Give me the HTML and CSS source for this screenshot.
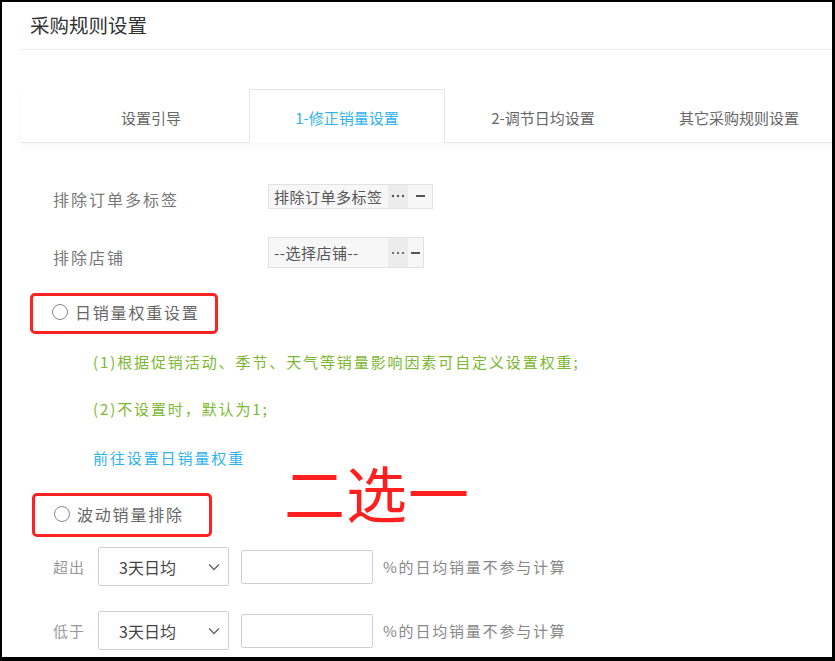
FILE: index.html
```html
<!DOCTYPE html>
<html lang="zh-CN">
<head>
<meta charset="utf-8">
<title>采购规则设置</title>
<link rel="stylesheet" href="styles.css">
</head>
<body>
<div class="frame">
  <div class="header"><h1 class="title">采购规则设置</h1></div>
  <div class="tabs">
    <div class="tab">设置引导</div>
    <div class="tab active">1-修正销量设置</div>
    <div class="tab">2-调节日均设置</div>
    <div class="tab">其它采购规则设置</div>
  </div>
  <div class="form">
    <div class="row row-tags">
      <span class="label">排除订单多标签</span>
      <div class="picker picker-tags">
        <span class="picker-text">排除订单多标签</span>
        <span class="picker-more"><svg width="14" height="4" viewBox="0 0 14 4"><circle cx="2" cy="2" r="1.2" fill="#555"/><circle cx="7" cy="2" r="1.2" fill="#555"/><circle cx="12" cy="2" r="1.2" fill="#555"/></svg></span>
        <span class="picker-minus"><span class="minus-bar"></span></span>
      </div>
    </div>
    <div class="row row-shop">
      <span class="label">排除店铺</span>
      <div class="picker picker-shop">
        <span class="picker-text">--选择店铺--</span>
        <span class="picker-more"><svg width="14" height="4" viewBox="0 0 14 4"><circle cx="2" cy="2" r="1.1" fill="#555"/><circle cx="7" cy="2" r="1.1" fill="#555"/><circle cx="12" cy="2" r="1.1" fill="#555"/></svg></span>
        <span class="picker-minus"><span class="minus-bar"></span></span>
      </div>
    </div>
    <div class="mark mark-weight">
      <span class="radio"></span><span class="radio-text">日销量权重设置</span>
    </div>
    <p class="tip tip-1">(1)根据促销活动、季节、天气等销量影响因素可自定义设置权重;</p>
    <p class="tip tip-2">(2)不设置时，默认为1;</p>
    <a class="link">前往设置日销量权重</a>
    <div class="choice">
      <div class="mark mark-wave">
        <span class="radio"></span><span class="radio-text">波动销量排除</span>
      </div>
      <span class="annot">二选一</span>
    </div>
    <div class="row row-range row-over">
      <span class="small-label">超出</span>
      <div class="select"><span>3天日均</span><svg class="chev" width="12" height="8" viewBox="0 0 12 8"><polyline points="1,1.5 6,6.5 11,1.5" fill="none" stroke="#666" stroke-width="1.4"/></svg></div>
      <div class="input"></div>
      <span class="hint">%的日均销量不参与计算</span>
    </div>
    <div class="row row-range row-under">
      <span class="small-label">低于</span>
      <div class="select"><span>3天日均</span><svg class="chev" width="12" height="8" viewBox="0 0 12 8"><polyline points="1,1.5 6,6.5 11,1.5" fill="none" stroke="#666" stroke-width="1.4"/></svg></div>
      <div class="input"></div>
      <span class="hint">%的日均销量不参与计算</span>
    </div>
  </div>
</div>
</body>
</html>
```

FILE: styles.css
```css
* { box-sizing: border-box; }
html, body { margin: 0; padding: 0; background: #000; }
body { font-family: "Noto Sans CJK SC", "Noto Sans", sans-serif; }
.frame {
  width: 835px; height: 661px; overflow: hidden;
  background: #fff;
  border-style: solid; border-color: #000;
  border-width: 2px 3px 4px 2px;
}
.header {
  margin-left: 19px;
  height: 48px;
  border-bottom: 1px solid #ececec;
  display: flex; align-items: center;
}
.title {
  margin: 0; padding-left: 9px;
  font-size: 19.5px; font-weight: 400; color: #333;
  line-height: 1;
  margin-top: -2px;
}
.tabs {
  margin-left: 19px;
  margin-top: 39px;
  padding-left: 32px;
  height: 54px;
  display: flex;
  border-bottom: 1px solid #e6e6e6;
  box-shadow: 0 3px 8px rgba(0,0,0,0.035);
}
.tab {
  flex: 0 0 196px;
  height: 54px;
  display: flex; align-items: center; justify-content: center;
  font-size: 15px; color: #666;
  padding-top: 2px;
}
.tab.active {
  color: #2fb2ee;
  background: #fff;
  border: 1px solid #e6e6e6;
  border-bottom: 1px solid #fff;
  height: 54px;
}
.form { padding-left: 26px; }
.row { display: flex; align-items: center; }
.label {
  font-size: 16px; letter-spacing: 2px; color: #777;
  width: 240px; flex: none;
  padding-left: 25px;
}
.row-tags { margin-top: 40px; height: 26px; }
.row-tags .label { padding-top: 6px; }
.row-shop { margin-top: 28px; height: 31px; }
.row-shop .label { padding-top: 8px; }
.picker {
  display: flex; align-items: stretch;
  border: 1px solid #e2e2e2;
  background: #f7f7f7;
  font-size: 15px; color: #555;
}
.picker-text { padding-left: 5px; display: flex; align-items: center; flex: none; letter-spacing: 0.5px; }
.picker-tags { width: 165px; height: 25px; }
.picker-tags .picker-text { width: 119px; }
.picker-shop { width: 156px; height: 31px; }
.picker-shop .picker-text { width: 119px; }
.picker-more {
  background: #ececec; width: 20px; flex: none;
  display: flex; align-items: center; justify-content: center;
}
.picker-minus {
  flex: 1; display: flex; align-items: center; justify-content: center;
}
.minus-bar { width: 9px; height: 2px; background: #555; }
.mark {
  display: inline-flex; align-items: center;
  border: 3px solid #ff2222;
  border-radius: 5px;
}
.mark-weight { margin-left: 2px; margin-top: 25px; width: 188px; height: 41px; padding-left: 19px; padding-bottom: 4px; }
.radio {
  width: 16px; height: 16px; border-radius: 50%;
  border: 1px solid #888; background: #fff; flex: none;
}
.radio-text { font-size: 16px; letter-spacing: 1.8px; color: #666; margin-left: 7px; }
.tip { margin: 0; padding-left: 65px; font-size: 15px; color: #7cb832; letter-spacing: 1.9px; }
.tip-1 { margin-top: 16px; line-height: 24px; }
.tip-2 { margin-top: 23px; line-height: 24px; }
.link {
  display: block; margin-top: 25px; padding-left: 65px;
  font-size: 15px; color: #2fb2ee; letter-spacing: 1.9px; line-height: 24px;
}
.choice { position: relative; height: 44px; margin-top: 12px; }
.mark-wave { margin-left: 4px; margin-top: 11px; width: 180px; height: 44px; padding-left: 19px; padding-bottom: 3px; }
.annot {
  position: absolute; left: 256px; top: -24px;
  font-size: 61px; color: #ff1f1f; line-height: 1.1; letter-spacing: 1px;
}
.row-range { height: 39px; }
.row-over { margin-top: 21px; }
.row-under { margin-top: 25px; }
.small-label { font-size: 15px; color: #999; letter-spacing: 1px; width: 70px; padding-left: 25px; flex: none; }
.select {
  width: 131px; height: 39px; flex: none;
  border: 1px solid #cfcfcf; border-radius: 2px;
  display: flex; align-items: center; justify-content: space-between;
  padding: 0 8px 0 20px;
  font-size: 16px; color: #444;
}
.input {
  width: 132px; height: 34px; flex: none; margin-left: 12px;
  border: 1px solid #cfcfcf; border-radius: 2px;
}
.hint { margin-left: 10px; font-size: 15px; color: #888; letter-spacing: 1.8px; }
```
